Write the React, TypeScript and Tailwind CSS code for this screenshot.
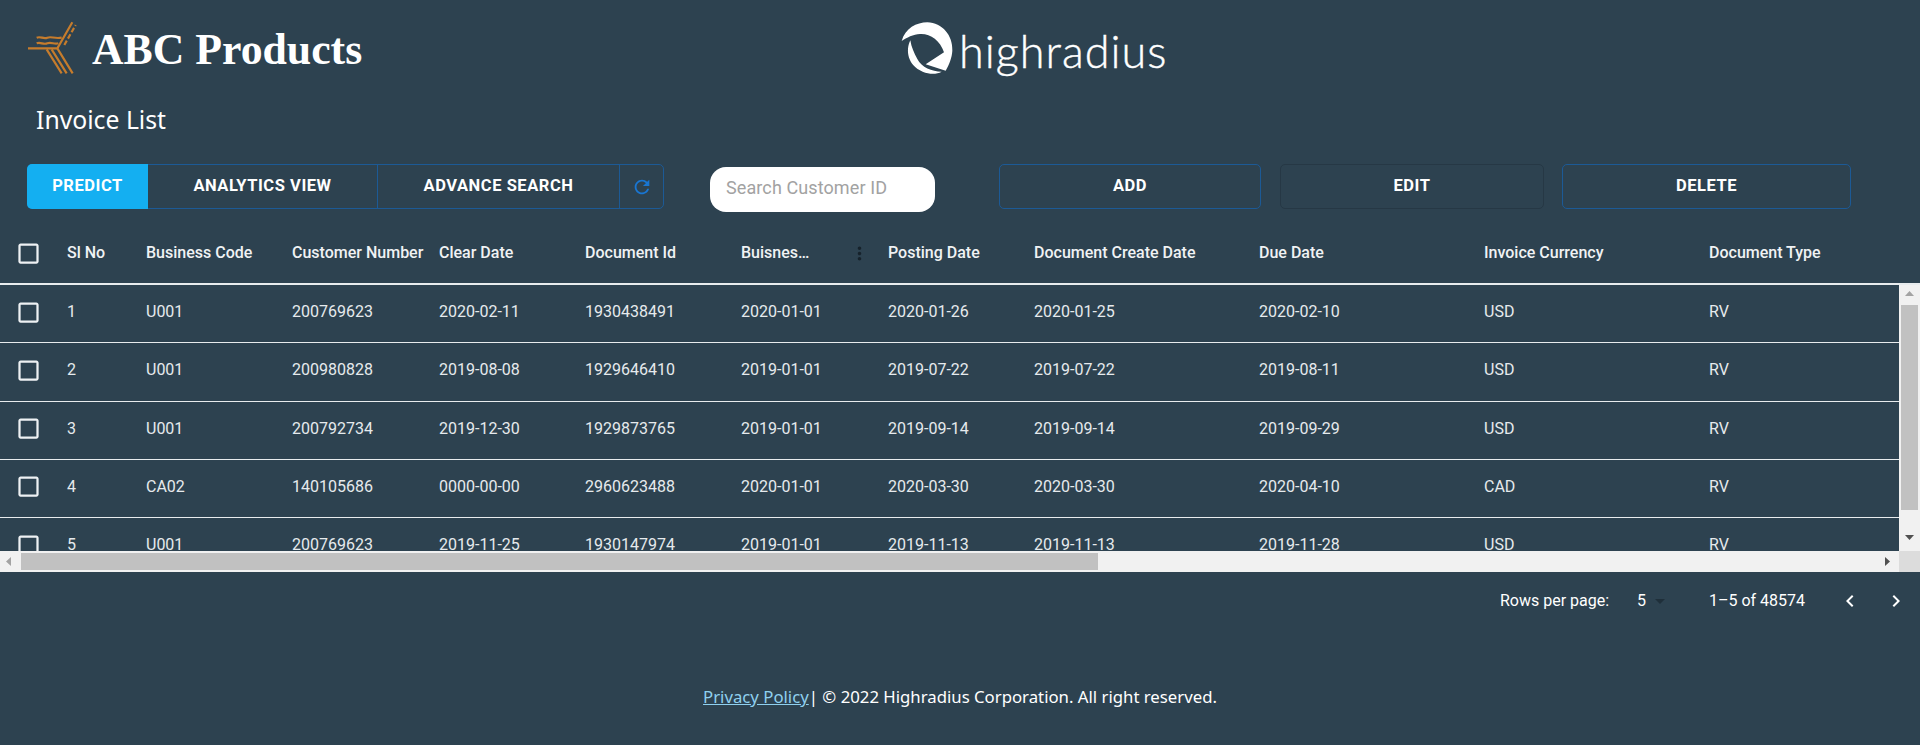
import React from 'react';

const columns = [
  { label: 'Sl No', width: 'w-[79px]' },
  { label: 'Business Code', width: 'w-[146px]' },
  { label: 'Customer Number', width: 'w-[147px]' },
  { label: 'Clear Date', width: 'w-[146px]' },
  { label: 'Document Id', width: 'w-[156px]' },
  { label: 'Buisnes…', width: 'w-[147px]' },
  { label: 'Posting Date', width: 'w-[146px]' },
  { label: 'Document Create Date', width: 'w-[225px]' },
  { label: 'Due Date', width: 'w-[225px]' },
  { label: 'Invoice Currency', width: 'w-[225px]' },
  { label: 'Document Type', width: 'w-[206px]' },
];

const rows = [
  ['1', 'U001', '200769623', '2020-02-11', '1930438491', '2020-01-01', '2020-01-26', '2020-01-25', '2020-02-10', 'USD', 'RV'],
  ['2', 'U001', '200980828', '2019-08-08', '1929646410', '2019-01-01', '2019-07-22', '2019-07-22', '2019-08-11', 'USD', 'RV'],
  ['3', 'U001', '200792734', '2019-12-30', '1929873765', '2019-01-01', '2019-09-14', '2019-09-14', '2019-09-29', 'USD', 'RV'],
  ['4', 'CA02', '140105686', '0000-00-00', '2960623488', '2020-01-01', '2020-03-30', '2020-03-30', '2020-04-10', 'CAD', 'RV'],
  ['5', 'U001', '200769623', '2019-11-25', '1930147974', '2019-01-01', '2019-11-13', '2019-11-13', '2019-11-28', 'USD', 'RV'],
];

const Checkbox = () => (
  <div className="w-[51px] shrink-0 flex justify-center pl-[5px]">
    <svg width="27" height="27" viewBox="0 0 24 24" fill="#eef1f3">
      <path d="M19 5v14H5V5h14m0-2H5c-1.1 0-2 .9-2 2v14c0 1.1.9 2 2 2h14c1.1 0 2-.9 2-2V5c0-1.1-.9-2-2-2z" />
    </svg>
  </div>
);

const AbcLogo = () => (
  <svg width="70" height="65" viewBox="0 0 210 195" fill="none" stroke="#c67c2c" strokeWidth="6.5">
    <path d="M24 100H112L157 22" />
    <path d="M50 68c12-5 20 5 32 0s20 4 43 0" />
    <path d="M50 85c12-5 20 5 32 0s20 4 33 0" />
    <path d="M133 90l34-60" strokeDasharray="15 7" />
    <path d="M80 103l45 72M95 103l45 72M112 100l46 75" />
  </svg>
);

const HrLogo = () => (
  <svg width="70" height="65" viewBox="0 0 210 195" fill="#ffffff">
    <path d="M20 78C30 40 65 22 97 22c45 1 77 40 75 85-1 20-10 43-20 60L92 148l55-36C135 75 105 55 75 57 55 58 35 68 20 78z" />
    <path d="M46 76c-15 30-8 76 37 94 22 9 42 8 57 0-30 0-60-13-73-38-10-18-18-36-21-56z" />
  </svg>
);

const ScrollArrow = ({ dir, dark }: { dir: 'up' | 'down' | 'left' | 'right'; dark?: boolean }) => {
  const points = {
    up: '0,5 4.5,0 9,5',
    down: '0,0 4.5,5 9,0',
    left: '5,0 0,4.5 5,9',
    right: '0,0 5,4.5 0,9',
  }[dir];
  return (
    <svg width="9" height="9" viewBox="0 0 9 9" fill={dark ? '#505050' : '#a3a3a3'} className="shrink-0">
      <polygon points={points} />
    </svg>
  );
};

const App: React.FC = () => {
  return (
    <div className="h-[745px] w-[1920px] overflow-hidden bg-[#2d4250] text-white font-['Roboto',sans-serif]">
      {/* Logos */}
      <div className="h-[96px] flex items-start">
        <div className="flex items-center pl-[20px] pt-[15px] w-[901px] shrink-0">
          <AbcLogo />
          <span className="ml-[2px] mt-[5px] text-[43.75px] leading-none font-bold font-['Liberation_Serif',serif] whitespace-nowrap">ABC Products</span>
        </div>
        <div className="flex items-center pt-[15px] -ml-[6px]">
          <HrLogo />
          <span className="-ml-[6px] mt-[7px] text-[45px] leading-none font-light font-['Lato',sans-serif] tracking-[1px] [-webkit-text-stroke:0.4px_white]">highradius</span>
        </div>
      </div>

      {/* Title */}
      <div className="pl-[36px] h-[48px] text-[24.75px] leading-[47px] font-['Noto_Sans',sans-serif]">Invoice List</div>

      {/* Toolbar */}
      <div className="mt-[20px] h-[48px] flex items-start pl-[27px] text-[16.5px] font-bold tracking-[0.55px]">
        <div className="flex h-[45px] w-[637px] border border-[#1c5a96] rounded-[5px]">
          <div className="w-[121px] -my-px -ml-px bg-[#14aff1] rounded-l-[5px] flex items-center justify-center">PREDICT</div>
          <div className="w-[230px] border-r border-[#1c5a96] flex items-center justify-center">ANALYTICS VIEW</div>
          <div className="w-[242px] border-r border-[#1c5a96] flex items-center justify-center">ADVANCE SEARCH</div>
          <div className="flex-1 flex items-center justify-center">
            <svg width="22" height="22" viewBox="0 0 24 24" fill="#1976d2">
              <path d="M17.65 6.35C16.2 4.9 14.21 4 12 4c-4.42 0-7.99 3.58-7.99 8s3.57 8 7.99 8c3.73 0 6.84-2.55 7.73-6h-2.08c-.82 2.33-3.04 4-5.65 4-3.31 0-6-2.69-6-6s2.69-6 6-6c1.66 0 3.14.69 4.22 1.78L13 11h7V4l-2.35 2.35z" />
            </svg>
          </div>
        </div>
        <div className="ml-[46px] mt-[3px] w-[225px] h-[45px] bg-white rounded-[16px] flex items-center pl-[16px] pb-[4px] text-[18px] font-normal tracking-[0.1px] text-[#a2a2a2]">Search Customer ID</div>
        <div className="ml-[64px] w-[262px] h-[45px] border border-[#1c5a96] rounded-[5px] flex items-center justify-center">ADD</div>
        <div className="ml-[19px] w-[264px] h-[45px] border border-[#263845] rounded-[5px] flex items-center justify-center">EDIT</div>
        <div className="ml-[18px] w-[289px] h-[45px] border border-[#1c5a96] rounded-[5px] flex items-center justify-center">DELETE</div>
      </div>

      {/* Column headers */}
      <div className="h-[73px] pt-[11px] flex items-center border-b-2 border-[#e8ecee] text-[16px] font-medium text-[#f0f2f4]">
        <Checkbox />
        {columns.map((col) => (
          <div key={col.label} className={`${col.width} shrink-0 pl-[16px] flex items-center whitespace-nowrap`}>
            {col.label === 'Buisnes…' ? (
              <>
                <span className="w-[108px]">{col.label}</span>
                <svg width="21" height="21" viewBox="0 0 24 24" fill="#16222b" className="shrink-0">
                  <path d="M12 8c1.1 0 2-.9 2-2s-.9-2-2-2-2 .9-2 2 .9 2 2 2zm0 2c-1.1 0-2 .9-2 2s.9 2 2 2 2-.9 2-2-.9-2-2-2zm0 6c-1.1 0-2 .9-2 2s.9 2 2 2 2-.9 2-2-.9-2-2-2z" />
                </svg>
              </>
            ) : (
              <span>{col.label}</span>
            )}
          </div>
        ))}
      </div>

      {/* Rows + vertical scrollbar */}
      <div className="flex h-[266px]">
        <div className="w-[1899px] overflow-hidden text-[16px] text-[#e6eaed]">
          {rows.map((row) => (
            <div key={row[0]} className="h-[58.25px] pb-[3px] flex items-center border-b border-[#e8ecee]">
              <Checkbox />
              {row.map((cell, i) => (
                <div key={i} className={`${columns[i].width} shrink-0 pl-[16px] whitespace-nowrap`}>{cell}</div>
              ))}
            </div>
          ))}
        </div>
        <div className="w-[21px] shrink-0 bg-[#f1f1f1] flex flex-col items-center">
          <div className="h-[20px] flex items-center"><ScrollArrow dir="up" /></div>
          <div className="w-[17px] h-[205px] bg-[#c1c1c1]" />
          <div className="flex-1 flex items-end pb-[7px]"><ScrollArrow dir="down" dark /></div>
        </div>
      </div>

      {/* Horizontal scrollbar */}
      <div className="flex h-[21px] bg-[#f1f1f1]">
        <div className="w-[21px] flex items-center justify-center"><ScrollArrow dir="left" /></div>
        <div className="w-[1077px] h-[17px] mt-[2px] bg-[#c1c1c1]" />
        <div className="w-[801px] flex items-center justify-center pl-[781px]"><ScrollArrow dir="right" dark /></div>
        <div className="w-[21px] bg-[#dcdcdc]" />
      </div>

      {/* Pagination */}
      <div className="h-[58px] flex items-center pl-[1500px] text-[16px] text-white whitespace-nowrap">
        <span className="w-[137px]">Rows per page:</span>
        <span className="w-[18px]">5</span>
        <svg width="10" height="5" viewBox="0 0 10 5" fill="#1f2f3a"><polygon points="0,0 10,0 5,5" /></svg>
        <span className="ml-[44px] w-[129px]">1–5 of 48574</span>
        <svg width="24" height="24" viewBox="0 0 24 24" fill="#ffffff">
          <path d="M15.41 16.59 10.83 12l4.58-4.59L14 6l-6 6 6 6 1.41-1.41z" />
        </svg>
        <svg width="24" height="24" viewBox="0 0 24 24" fill="#ffffff" className="ml-[22px]">
          <path d="M8.59 16.59 13.17 12 8.59 7.41 10 6l6 6-6 6-1.41-1.41z" />
        </svg>
      </div>

      {/* Footer */}
      <div className="mt-[54px] text-center text-[16.75px] font-['Noto_Sans',sans-serif]">
        <a href="#" className="underline text-[#8fd0ef]">Privacy Policy</a>| © 2022 Highradius Corporation. All right reserved.
      </div>
    </div>
  );
};

export default App;
